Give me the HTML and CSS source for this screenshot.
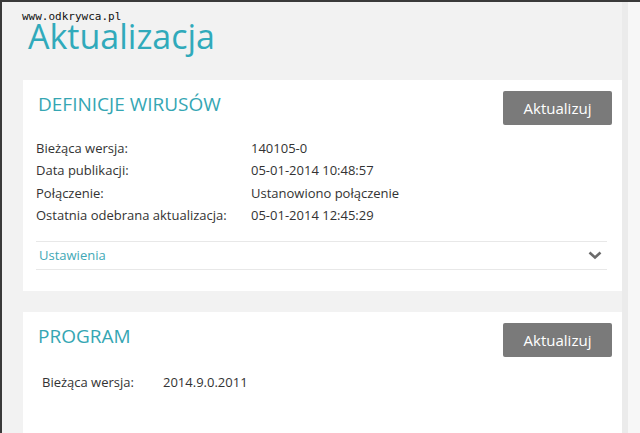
FILE: index.html
```html
<!DOCTYPE html>
<html lang="pl">
<head>
    <meta charset="UTF-8">
    <title>Aktualizacja</title>
    <link rel="stylesheet" href="styles.css">
</head>
<body>
    <div class="okno">
        <div class="tresc">
            <div class="znak">www.odkrywca.pl</div>
            <h1 class="tytul">Aktualizacja</h1>

            <div class="karta">
                <div class="naglowek">
                    <h2>DEFINICJE WIRUSÓW</h2>
                    <button class="przycisk">Aktualizuj</button>
                </div>
                <div class="tabela">
                    <div class="wiersz"><span class="etykieta">Bieżąca wersja:</span><span>140105-0</span></div>
                    <div class="wiersz"><span class="etykieta">Data publikacji:</span><span>05-01-2014 10:48:57</span></div>
                    <div class="wiersz"><span class="etykieta">Połączenie:</span><span>Ustanowiono połączenie</span></div>
                    <div class="wiersz"><span class="etykieta">Ostatnia odebrana aktualizacja:</span><span>05-01-2014 12:45:29</span></div>
                </div>
                <div class="ustawienia">
                    <span>Ustawienia</span>
                    <svg width="14" height="9" viewBox="0 0 14 9"><path d="M1.5 1.5 L7 6.5 L12.5 1.5" fill="none" stroke="#6b6b6b" stroke-width="2.6"/></svg>
                </div>
            </div>

            <div class="karta karta-program">
                <div class="naglowek">
                    <h2>PROGRAM</h2>
                    <button class="przycisk">Aktualizuj</button>
                </div>
                <div class="tabela tabela-program">
                    <div class="wiersz"><span class="etykieta">Bieżąca wersja:</span><span>2014.9.0.2011</span></div>
                </div>
            </div>
        </div>
        <div class="pasek"></div>
    </div>
</body>
</html>
```

FILE: styles.css
```css
body {
    margin: 0;
    font-family: "Open Sans", Arial, sans-serif;
    color: #333;
    background-color: #f2f2f2;
    overflow: hidden;
}
.okno {
    display: flex;
    height: 433px;
    border-top: 2px solid #3a3a3a;
    border-left: 2px solid #3a3a3a;
    box-sizing: border-box;
    position: relative;
    overflow: hidden;
}
.tresc {
    flex: 1;
    padding: 0 0 0 21px;
}
.pasek {
    width: 12px;
    border-left: 6px solid #ebebeb;
    background-color: #f7f7f7;
}
.znak {
    position: absolute;
    left: 20px;
    top: 9px;
    font-family: "DejaVu Sans Mono", monospace;
    font-size: 11px;
    line-height: 11px;
    color: #111;
}
.tytul {
    margin: 21px 0 0 5px;
    font-size: 34px;
    font-weight: normal;
    line-height: 26px;
    color: #30aabb;
    height: 57px;
}
.karta {
    background-color: #fff;
    padding: 11px 10px 21px 13px;
    margin-bottom: 21px;
}
.naglowek {
    display: flex;
    justify-content: space-between;
    align-items: flex-start;
}
h2 {
    margin: 1px 0 0 2px;
    font-size: 19px;
    font-weight: normal;
    color: #35a6b3;
    line-height: 24px;
}
.przycisk {
    width: 109px;
    height: 34px;
    border: none;
    border-radius: 2px;
    background-color: #7a7a7a;
    color: #fff;
    font-family: "Open Sans", Arial, sans-serif;
    font-size: 15px;
    padding: 0;
}
.tabela {
    margin-top: 12px;
    margin-right: 5px;
    font-size: 13px;
}
.wiersz {
    display: flex;
    line-height: 22.4px;
}
.etykieta {
    width: 215px;
}
.ustawienia {
    margin: 14px 5px 0 0;
    border-top: 1px solid #e8e8e8;
    border-bottom: 1px solid #e8e8e8;
    height: 27px;
    display: flex;
    justify-content: space-between;
    align-items: center;
    padding: 0 5px 0 3px;
    font-size: 13px;
    color: #3fa8b6;
}
.karta-program {
    height: 200px;
}
.tabela-program {
    margin-top: 14px;
    padding-left: 6px;
}
.tabela-program .etykieta {
    width: 121px;
}
```
